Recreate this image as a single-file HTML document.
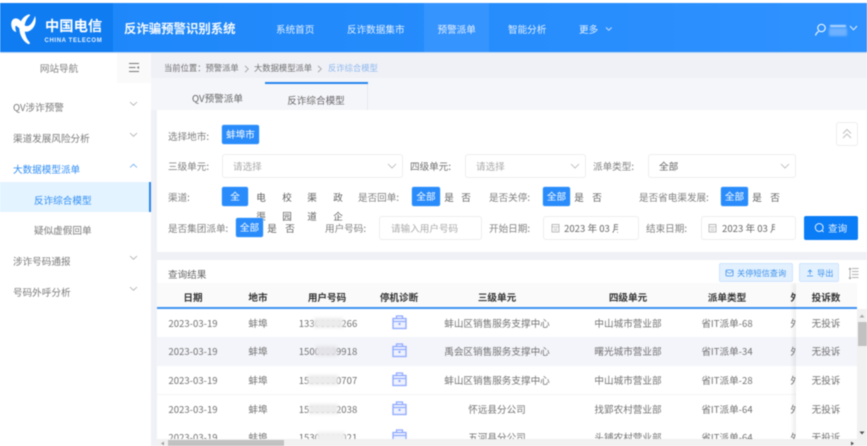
<!DOCTYPE html>
<html lang="zh-CN">
<head>
<meta charset="utf-8">
<title>反诈骗预警识别系统</title>
<style>
html,body{margin:0;padding:0;background:#fff}
body{width:867px;height:446px;overflow:hidden;position:relative;font-family:"Liberation Sans","Noto Sans CJK SC",sans-serif;font-size:9.6px;color:#777}
#app{position:absolute;left:0;top:0;width:867px;height:446px;overflow:hidden;filter:blur(.45px);font-family:"Noto Sans CJK SC","Liberation Sans",sans-serif}
.a{position:absolute}
.t{position:absolute;line-height:20px;height:20px;white-space:nowrap}
.c{transform:translateX(-50%)}
.lab{color:#808080}
.val{color:#5f5f5f}
.chip{position:absolute;background:#2a8cfb;color:#fff;text-align:center;border-radius:2px;line-height:19px;height:19px;box-shadow:0 0 0 .5px #b8d8ff}
.box{position:absolute;background:#fff;border:1px solid #eeeeee;border-radius:3px;box-sizing:border-box;height:24px}
.nav{position:absolute;top:19px;color:#e3f0ff;line-height:20px;white-space:nowrap}
.side{position:absolute;left:13px;color:#7a7a7a;line-height:20px;white-space:nowrap;font-size:9.6px}
svg{position:absolute;overflow:visible}
.cell{position:absolute;height:20px;line-height:20px;transform:translateX(-50%);white-space:nowrap;color:#727272}
.th{position:absolute;top:3.5px;line-height:20px;transform:translateX(-50%);white-space:nowrap;color:#333;font-weight:bold}
.mask{position:absolute;background:#e6e6e6;filter:blur(1.5px);height:10px}
.crumb{font-size:8.3px;color:#6f6f6f}
.btxt{font-size:8.2px;color:#3f92ea}
</style>
</head>
<body>
<div id="app">
  <!-- header -->
  <div class="a" style="left:0;top:3px;width:867px;height:49px;background:linear-gradient(90deg,#1c86f9,#2f92ff)"></div>
  <div class="a" style="left:0;top:3px;width:113px;height:49px;background:#0f7cf2"></div>
  <div class="a" style="left:424px;top:3px;width:65px;height:49px;background:#3694ff"></div>
  <div class="a" style="left:0;top:52px;width:867px;height:1px;background:#b9d5f6"></div>
  <svg style="left:0;top:0" width="45" height="52" viewBox="0 0 45 52">
    <path d="M11.500 26.500C10 20 14.500 16.500 19 19.500C23 22.500 23.500 26.500 27.500 26C31 25.500 33.500 20.500 35 16C37 21.500 34.500 29.500 28 31.500C22.500 33 19 27.500 16.500 26C15 25.300 15 28 16.300 32C13.500 31.500 12 29 11.500 26.500Z" fill="#fff"/>
    <path d="M28.500 14.500C21.500 17 18.500 24 19.500 30.500C20.200 36 23.500 41.500 28 44C29.500 44.500 30.500 43.500 29.500 42.300C26 38 24.500 33 24.500 28C24.500 23 26.500 18.500 30 15.500C30.500 15 29.500 14.200 28.500 14.500Z" fill="#fff"/>
  </svg>
  <div class="t" style="left:45px;top:16px;font:bold 14.3px/20px 'Noto Sans CJK SC',sans-serif;color:#fff;height:20px;white-space:nowrap">中国电信</div>
  <div class="t" style="left:44.500px;top:30.500px;font:bold 6px/20px 'Liberation Sans',sans-serif;color:#e6f1ff;letter-spacing:.62px">CHINA TELECOM</div>
  <div class="t" style="left:124px;top:18px;font-size:12.400px;font-weight:bold;color:#f4f9ff;line-height:20px;height:20px">反诈骗预警识别系统</div>
  <div class="nav" style="left:276px">系统首页</div>
  <div class="nav" style="left:347px">反诈数据集市</div>
  <div class="nav" style="left:437.500px">预警派单</div>
  <div class="nav" style="left:508px">智能分析</div>
  <div class="nav" style="left:579px">更多</div>
  <svg style="left:605px;top:26px" width="8" height="6" viewBox="0 0 8 6"><path d="M1 1.500L3.800 4.300L6.600 1.500" fill="none" stroke="#cfe4ff" stroke-width=".9"/></svg>
  <svg style="left:814px;top:22px" width="14" height="15" viewBox="0 0 14 15"><circle cx="7.500" cy="6" r="3.700" fill="none" stroke="#eaf4ff" stroke-width="1.200"/><path d="M1.500 13.500C2 11.500 3 10.500 4.500 9.500" fill="none" stroke="#eaf4ff" stroke-width="1.200"/></svg>
  <div class="a" style="left:829px;top:28px;width:18px;height:8px;background:#6eb1ff;filter:blur(1px)"></div>
  <div class="a" style="left:830px;top:25px;width:16px;height:2px;background:#bcdcff;filter:blur(.5px)"></div>
  <svg style="left:849px;top:25px" width="10" height="7" viewBox="0 0 10 7"><path d="M1 1L4.500 4.800L8 1" fill="none" stroke="#e3f0ff" stroke-width="1"/></svg>

  <!-- page backgrounds -->
  <div class="a" style="left:151px;top:53px;width:716px;height:393px;background:#f0f1f6"></div>
  <div class="a" style="left:151px;top:78px;width:716px;height:32px;background:#f5f6fa"></div>

  <!-- sidebar -->
  <div class="a" style="left:0;top:53px;width:151px;height:393px;background:#fff"></div>
  <div class="a" style="left:117px;top:53px;width:34px;height:30px;background:#fafafa"></div>
  <div class="t c lab" style="left:59px;top:58px">网站导航</div>
  <svg style="left:128px;top:62px" width="12" height="12" viewBox="0 0 12 12"><path d="M1 1.500H11M1 5.500H7.500M1 9.500H11" stroke="#777" stroke-width="1" fill="none"/><path d="M11 4L8.800 5.500L11 7Z" fill="#777"/></svg>
  <div class="side" style="top:97px">QV涉诈预警</div>
  <div class="side" style="top:128px">渠道发展风险分析</div>
  <div class="side" style="top:159px;color:#2f8df5">大数据模型派单</div>
  <div class="a" style="left:0;top:182px;width:149px;height:30px;background:#e3f3ff"></div>
  <div class="a" style="left:149px;top:182px;width:2px;height:30px;background:#2b86ee"></div>
  <div class="side" style="left:34px;top:190px;color:#2f8df5">反诈综合模型</div>
  <div class="side" style="left:34px;top:220px">疑似虚假回单</div>
  <div class="side" style="top:251px">涉诈号码通报</div>
  <div class="side" style="top:282px">号码外呼分析</div>
  <svg style="left:128.500px;top:101px" width="9" height="6" viewBox="0 0 9 6"><path d="M1 1L4.500 4.300L8 1" fill="none" stroke="#aaa" stroke-width=".8"/></svg>
  <svg style="left:128.500px;top:132px" width="9" height="6" viewBox="0 0 9 6"><path d="M1 1L4.500 4.300L8 1" fill="none" stroke="#aaa" stroke-width=".8"/></svg>
  <svg style="left:128.500px;top:163px" width="9" height="6" viewBox="0 0 9 6"><path d="M1 4.500L4.500 1.200L8 4.500" fill="none" stroke="#6aa9ef" stroke-width=".8"/></svg>
  <svg style="left:128.500px;top:255px" width="9" height="6" viewBox="0 0 9 6"><path d="M1 1L4.500 4.300L8 1" fill="none" stroke="#aaa" stroke-width=".8"/></svg>
  <svg style="left:128.500px;top:286px" width="9" height="6" viewBox="0 0 9 6"><path d="M1 1L4.500 4.300L8 1" fill="none" stroke="#aaa" stroke-width=".8"/></svg>

  <!-- breadcrumb -->
  <div class="t crumb" style="left:164px;top:58px">当前位置：预警派单</div>
  <svg style="left:244px;top:64.500px" width="6" height="8" viewBox="0 0 6 8"><path d="M1 .8L4.300 4L1 7.200" fill="none" stroke="#999" stroke-width=".8"/></svg>
  <div class="t crumb" style="left:254px;top:58px">大数据模型派单</div>
  <svg style="left:317px;top:64.500px" width="6" height="8" viewBox="0 0 6 8"><path d="M1 .8L4.300 4L1 7.200" fill="none" stroke="#999" stroke-width=".8"/></svg>
  <div class="t crumb" style="left:328px;top:58px;color:#8db7ee">反诈综合模型</div>

  <!-- tabs -->
  <div class="a" style="left:265px;top:82px;width:103px;height:28px;background:#f5f6fa;border-right:1px solid #e8e9ee;box-sizing:border-box"></div>
  <div class="a" style="left:265px;top:82px;width:103px;height:2px;background:#2585ee"></div>
  <div class="t c" style="left:217.500px;top:88px;color:#666">QV预警派单</div>
  <div class="t c" style="left:316px;top:90px;color:#666">反诈综合模型</div>

  <!-- filter card -->
  <div class="a" style="left:157px;top:110px;width:710px;height:142px;background:#fff"></div>
  <div class="t lab" style="left:168px;top:126px">选择地市:</div>
  <div class="chip" style="left:222px;top:125px;width:37px">蚌埠市</div>
  <div class="box" style="left:836px;top:122px;width:22px;height:24px"></div>
  <svg style="left:842px;top:128px" width="10" height="12" viewBox="0 0 10 12"><path d="M1 5.500L5 1.500L9 5.500M1 10L5 6L9 10" fill="none" stroke="#c0c0c0" stroke-width="1"/></svg>

  <div class="t lab" style="left:168px;top:156px">三级单元:</div>
  <div class="box" style="left:222px;top:154px;width:181px"></div>
  <div class="t" style="left:233px;top:156px;color:#aaa">请选择</div>
  <svg style="left:387px;top:163px" width="10" height="7" viewBox="0 0 10 7"><path d="M1 1L5 5L9 1" fill="none" stroke="#b5b5b5" stroke-width=".8"/></svg>
  <div class="t" style="left:410px;top:156px;color:#6f6f6f">四级单元:</div>
  <div class="box" style="left:465px;top:154px;width:121px"></div>
  <div class="t" style="left:476px;top:156px;color:#aaa">请选择</div>
  <svg style="left:570px;top:163px" width="10" height="7" viewBox="0 0 10 7"><path d="M1 1L5 5L9 1" fill="none" stroke="#b5b5b5" stroke-width=".8"/></svg>
  <div class="t lab" style="left:593px;top:156px">派单类型:</div>
  <div class="box" style="left:648px;top:154px;width:148px"></div>
  <div class="t val" style="left:659px;top:156px">全部</div>
  <svg style="left:780px;top:163px" width="10" height="7" viewBox="0 0 10 7"><path d="M1 1L5 5L9 1" fill="none" stroke="#b5b5b5" stroke-width=".8"/></svg>

  <div class="t lab" style="left:168px;top:187px">渠道:</div>
  <div class="chip" style="left:222px;top:187px;width:26px">全</div>
  <div class="t c val" style="left:261px;top:187px">电</div>
  <div class="t c val" style="left:287px;top:187px">校</div>
  <div class="t c val" style="left:312px;top:187px">渠</div>
  <div class="t c val" style="left:338px;top:187px">政</div>
  <div class="t c val" style="left:261px;top:206px">渠</div>
  <div class="t c val" style="left:287px;top:206px">园</div>
  <div class="t c val" style="left:312px;top:206px">道</div>
  <div class="t c val" style="left:338px;top:206px">企</div>
  <div class="t lab" style="left:358px;top:187px">是否回单:</div>
  <div class="chip" style="left:412px;top:187px;width:28px">全部</div>
  <div class="t c val" style="left:449px;top:187px">是</div>
  <div class="t c val" style="left:466px;top:187px">否</div>
  <div class="t lab" style="left:489px;top:187px">是否关停:</div>
  <div class="chip" style="left:543px;top:187px;width:27px">全部</div>
  <div class="t c val" style="left:579px;top:187px">是</div>
  <div class="t c val" style="left:597px;top:187px">否</div>
  <div class="t lab" style="left:639px;top:187px">是否省电渠发展:</div>
  <div class="chip" style="left:721px;top:187px;width:27px">全部</div>
  <div class="t c val" style="left:757px;top:187px">是</div>
  <div class="t c val" style="left:775px;top:187px">否</div>

  <div class="t lab" style="left:168px;top:218px">是否集团派单:</div>
  <div class="chip" style="left:236px;top:218px;width:27px">全部</div>
  <div class="t c val" style="left:272px;top:218px">是</div>
  <div class="t c val" style="left:290px;top:218px">否</div>
  <div class="t lab" style="left:325px;top:218px">用户号码:</div>
  <div class="box" style="left:379px;top:216px;width:103px"></div>
  <div class="t" style="left:391px;top:218px;color:#aaa">请输入用户号码</div>
  <div class="t lab" style="left:489px;top:218px">开始日期:</div>
  <div class="box" style="left:543px;top:216px;width:96px"></div>
  <svg style="left:551px;top:223px" width="9" height="10" viewBox="0 0 9 10"><rect x="1" y="1.500" width="7" height="7.500" fill="none" stroke="#aaa" stroke-width=".8"/><path d="M1 3.800H8M2.500 5.500H6.500M2.500 7.200H6.500" stroke="#aaa" stroke-width=".6"/></svg>
  <div class="a" style="left:564px;top:218px;width:54px;height:20px;overflow:hidden;line-height:20px;white-space:nowrap;color:#666">2023 年 03 月</div>
  <div class="t lab" style="left:646px;top:218px">结束日期:</div>
  <div class="box" style="left:701px;top:216px;width:95px"></div>
  <svg style="left:708px;top:223px" width="9" height="10" viewBox="0 0 9 10"><rect x="1" y="1.500" width="7" height="7.500" fill="none" stroke="#aaa" stroke-width=".8"/><path d="M1 3.800H8M2.500 5.500H6.500M2.500 7.200H6.500" stroke="#aaa" stroke-width=".6"/></svg>
  <div class="a" style="left:722px;top:218px;width:53px;height:20px;overflow:hidden;line-height:20px;white-space:nowrap;color:#666">2023 年 03 月</div>
  <div class="a" style="left:804px;top:216px;width:54px;height:24px;background:#0a7cf6;border-radius:2px"></div>
  <svg style="left:814px;top:222px" width="11" height="12" viewBox="0 0 11 12"><circle cx="5.200" cy="5.500" r="3.900" fill="none" stroke="#fff" stroke-width=".9"/><path d="M8 8.300L9.500 10" stroke="#fff" stroke-width=".9"/></svg>
  <div class="t" style="left:828px;top:218px;color:#e8f3ff">查询</div>

  <!-- results card -->
  <div class="a" style="left:157px;top:260px;width:710px;height:186px;background:#fff"></div>
  <div class="t" style="left:168px;top:264px;color:#666">查询结果</div>
  <div class="a" style="left:719px;top:263px;width:74px;height:19px;background:#e3f1ff;border:1px solid #cfe4fd;border-radius:2px;box-sizing:border-box"></div>
  <svg style="left:725px;top:269px" width="9" height="8" viewBox="0 0 9 8"><rect x="1" y="1" width="7" height="6" fill="none" stroke="#3f92ea" stroke-width=".8" rx=".8"/><path d="M1 2L4.500 4.500L8 2" fill="none" stroke="#3f92ea" stroke-width=".7"/></svg>
  <div class="t btxt" style="left:737px;top:263px">关停短信查询</div>
  <div class="a" style="left:799px;top:263px;width:40px;height:19px;background:#e3f1ff;border:1px solid #cfe4fd;border-radius:2px;box-sizing:border-box"></div>
  <svg style="left:806px;top:269px" width="8" height="8" viewBox="0 0 8 8"><path d="M4 1V5.500M2 3L4 1L6 3M1 7H7" fill="none" stroke="#3f92ea" stroke-width=".8"/></svg>
  <div class="t btxt" style="left:817px;top:263px">导出</div>
  <svg style="left:848px;top:267px" width="11" height="13" viewBox="0 0 11 13"><path d="M4 1.500H10.500M4 4.500H10.500M4 7.500H10.500M4 10.500H10.500" stroke="#999" stroke-width=".8"/><path d="M2 1V12M.8 2.500L2 1L3.200 2.500M.8 10.500L2 12L3.200 10.500" fill="none" stroke="#999" stroke-width=".7"/></svg>

  <!-- table -->
  <div class="a" style="left:157px;top:283px;width:710px;height:156px;overflow:hidden;background:#fff">
    <div class="a" style="left:0;top:0;width:700px;height:24px;background:#fafafa"></div>
    <div class="a" style="left:0;top:24px;width:700px;height:2px;background:#3d92f4"></div>
    <div class="th" style="left:36px">日期</div>
    <div class="th" style="left:101px">地市</div>
    <div class="th" style="left:170px">用户号码</div>
    <div class="th" style="left:242px">停机诊断</div>
    <div class="th" style="left:340px">三级单元</div>
    <div class="th" style="left:471px">四级单元</div>
    <div class="th" style="left:570px">派单类型</div>
    <div class="th" style="left:643px">外呼</div>

    <div class="a" style="left:0;top:54px;width:700px;height:29px;background:#f4f5fa"></div>
    <div class="a" style="left:0;top:111px;width:700px;height:1px;background:#f5f5f8"></div>

    <!-- row 1 -->
    <div class="cell" style="left:36px;top:30px">2023-03-19</div><div class="cell" style="left:101px;top:30px">蚌埠</div><div class="cell" style="left:171px;top:30px">13300000266</div><div class="mask" style="left:157px;top:35px;width:29px;background:#ececec"></div>
    <svg style="left:235px;top:32px" width="15" height="15" viewBox="0 0 15 15"><path d="M4.500 3.500V1H10.500V3.500" fill="none" stroke="#8fa9ff" stroke-width="1.300"/><rect x="1" y="3.500" width="13" height="10" fill="#eef2ff" stroke="#8fa9ff" stroke-width="1.300"/><path d="M1 6.500H14" stroke="#8fa9ff" stroke-width="1.200"/><rect x="6.500" y="8" width="2" height="2" fill="#8fa9ff"/></svg>
    <div class="cell" style="left:340px;top:30px">蚌山区销售服务支撑中心</div><div class="cell" style="left:471px;top:30px">中山城市营业部</div><div class="cell" style="left:570px;top:30px">省IT派单-68</div><div class="cell" style="left:643px;top:30px">外呼</div>
    <!-- row 2 -->
    <div class="cell" style="left:36px;top:58px">2023-03-19</div><div class="cell" style="left:101px;top:58px">蚌埠</div><div class="cell" style="left:171px;top:58px">15000009918</div><div class="mask" style="left:159px;top:63px;width:21px;background:#e4e4e8"></div>
    <svg style="left:235px;top:60px" width="15" height="15" viewBox="0 0 15 15"><path d="M4.500 3.500V1H10.500V3.500" fill="none" stroke="#8fa9ff" stroke-width="1.300"/><rect x="1" y="3.500" width="13" height="10" fill="#eef2ff" stroke="#8fa9ff" stroke-width="1.300"/><path d="M1 6.500H14" stroke="#8fa9ff" stroke-width="1.200"/><rect x="6.500" y="8" width="2" height="2" fill="#8fa9ff"/></svg>
    <div class="cell" style="left:340px;top:58px">禹会区销售服务支撑中心</div><div class="cell" style="left:471px;top:58px">曙光城市营业部</div><div class="cell" style="left:570px;top:58px">省IT派单-34</div><div class="cell" style="left:643px;top:58px">外呼</div>
    <!-- row 3 -->
    <div class="cell" style="left:36px;top:87px">2023-03-19</div><div class="cell" style="left:101px;top:87px">蚌埠</div><div class="cell" style="left:171px;top:87px">15300000707</div><div class="mask" style="left:151px;top:92px;width:30px;background:#ececec"></div>
    <svg style="left:235px;top:89px" width="15" height="15" viewBox="0 0 15 15"><path d="M4.500 3.500V1H10.500V3.500" fill="none" stroke="#8fa9ff" stroke-width="1.300"/><rect x="1" y="3.500" width="13" height="10" fill="#eef2ff" stroke="#8fa9ff" stroke-width="1.300"/><path d="M1 6.500H14" stroke="#8fa9ff" stroke-width="1.200"/><rect x="6.500" y="8" width="2" height="2" fill="#8fa9ff"/></svg>
    <div class="cell" style="left:340px;top:87px">蚌山区销售服务支撑中心</div><div class="cell" style="left:471px;top:87px">中山城市营业部</div><div class="cell" style="left:570px;top:87px">省IT派单-28</div><div class="cell" style="left:643px;top:87px">外呼</div>
    <!-- row 4 -->
    <div class="cell" style="left:36px;top:116px">2023-03-19</div><div class="cell" style="left:101px;top:116px">蚌埠</div><div class="cell" style="left:171px;top:116px">15300002038</div><div class="mask" style="left:152px;top:121px;width:29px;background:#ececec"></div>
    <svg style="left:235px;top:118px" width="15" height="15" viewBox="0 0 15 15"><path d="M4.500 3.500V1H10.500V3.500" fill="none" stroke="#8fa9ff" stroke-width="1.300"/><rect x="1" y="3.500" width="13" height="10" fill="#eef2ff" stroke="#8fa9ff" stroke-width="1.300"/><path d="M1 6.500H14" stroke="#8fa9ff" stroke-width="1.200"/><rect x="6.500" y="8" width="2" height="2" fill="#8fa9ff"/></svg>
    <div class="cell" style="left:340px;top:116px">怀远县分公司</div><div class="cell" style="left:471px;top:116px">找郢农村营业部</div><div class="cell" style="left:570px;top:116px">省IT派单-64</div><div class="cell" style="left:643px;top:116px">外呼</div>
    <!-- row 5 -->
    <div class="cell" style="left:36px;top:144px">2023-03-19</div><div class="cell" style="left:101px;top:144px">蚌埠</div><div class="cell" style="left:171px;top:144px">15300000021</div><div class="mask" style="left:160px;top:149px;width:28px;background:#f0f0f0"></div>
    <svg style="left:235px;top:146px" width="15" height="15" viewBox="0 0 15 15"><path d="M4.500 3.500V1H10.500V3.500" fill="none" stroke="#8fa9ff" stroke-width="1.300"/><rect x="1" y="3.500" width="13" height="10" fill="#eef2ff" stroke="#8fa9ff" stroke-width="1.300"/><path d="M1 6.500H14" stroke="#8fa9ff" stroke-width="1.200"/></svg>
    <div class="cell" style="left:340px;top:144px">五河县分公司</div><div class="cell" style="left:471px;top:144px">头铺农村营业部</div><div class="cell" style="left:570px;top:144px">省IT派单-64</div><div class="cell" style="left:643px;top:144px">外呼</div>

    <!-- fixed column -->
    <div class="a" style="left:639px;top:0;width:61px;height:156px;background:#fff;box-shadow:-3px 0 4px rgba(0,0,0,.07)"></div>
    <div class="a" style="left:639px;top:54px;width:61px;height:29px;background:#f4f5fa"></div>
    <div class="a" style="left:639px;top:0;width:61px;height:24px;background:#fafafa"></div>
    <div class="a" style="left:639px;top:24px;width:61px;height:2px;background:#3d92f4"></div>
    <div class="th" style="left:669px">投诉数</div>
    <div class="cell" style="left:669px;top:30px">无投诉</div>
    <div class="cell" style="left:669px;top:58px">无投诉</div>
    <div class="cell" style="left:669px;top:87px">无投诉</div>
    <div class="cell" style="left:669px;top:116px">无投诉</div>
    <div class="cell" style="left:669px;top:144px">无投诉</div>
  </div>

  <!-- scrollbars -->
  <div class="a" style="left:857px;top:309px;width:10px;height:130px;background:#f1f1f1"></div>
  <div class="a" style="left:858px;top:322px;width:9px;height:24px;background:#c1c1c1"></div>
  <svg style="left:858px;top:313px" width="8" height="6" viewBox="0 0 8 6"><path d="M4 1.500L6.500 4.500H1.500Z" fill="#a8a8a8"/></svg>
  <svg style="left:858px;top:430px" width="8" height="6" viewBox="0 0 8 6"><path d="M4 4.500L1.500 1.500H6.500Z" fill="#505050"/></svg>
  <div class="a" style="left:157px;top:439px;width:710px;height:7px;background:#f1f1f1"></div>
  <div class="a" style="left:168px;top:440px;width:116px;height:6px;background:#c1c1c1"></div>
  <svg style="left:160px;top:441px" width="5" height="5" viewBox="0 0 5 5"><path d="M1 2.500L4 .5V4.500Z" fill="#a0a0a0"/></svg>
  <svg style="left:850px;top:441px" width="5" height="5" viewBox="0 0 5 5"><path d="M4 2.500L1 .5V4.500Z" fill="#505050"/></svg>
</div>
</body>
</html>
